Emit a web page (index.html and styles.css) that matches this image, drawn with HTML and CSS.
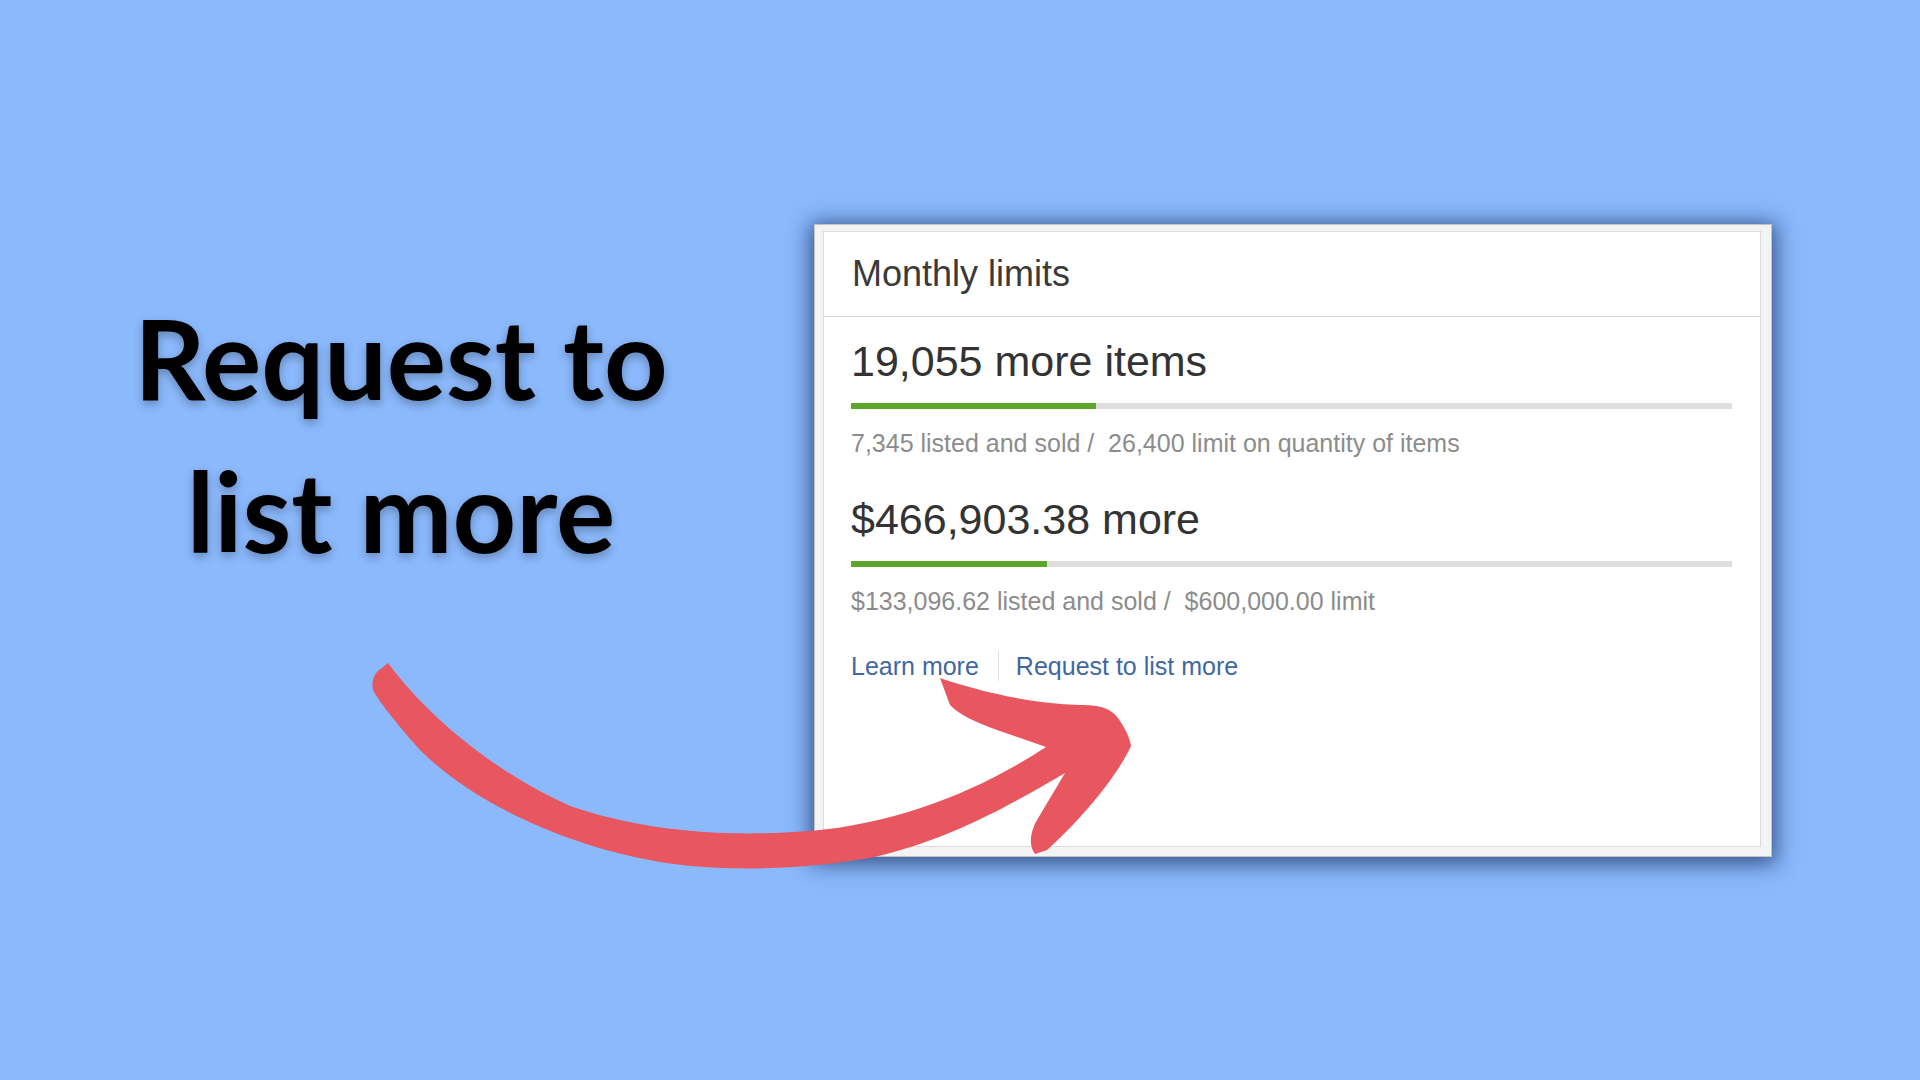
FILE: index.html
```html
<!DOCTYPE html>
<html lang="en">
<head>
  <meta charset="UTF-8" />
  <meta name="viewport" content="width=device-width, initial-scale=1.0"/>
  <title>Request to list more</title>
  <link rel="stylesheet" href="styles.css">
</head>
<body>

  <main class="slide">
    <h1 class="headline">Request to<br>list more</h1>

    <section class="limits-frame">
      <div class="limits">
        <div class="limits-head">Monthly limits</div>

        <div class="limits-body">
          <div class="limit">
            <div class="limit-left">19,055 more items</div>
            <div class="meter"><div class="meter-fill" style="width: 27.8%"></div></div>
            <div class="limit-used">7,345 listed and sold /&nbsp; 26,400 limit on quantity of items</div>
          </div>

          <div class="limit">
            <div class="limit-left">$466,903.38 more</div>
            <div class="meter"><div class="meter-fill" style="width: 22.2%"></div></div>
            <div class="limit-used">$133,096.62 listed and sold /&nbsp; $600,000.00 limit</div>
          </div>

          <div class="limit-links">
            <a href="#">Learn more</a>
            <a href="#">Request to list more</a>
          </div>
        </div>
      </div>
    </section>

    <!-- hand drawn pointer from the headline to the link -->
    <svg class="pointer" viewBox="0 0 1920 1080" width="1920" height="1080">
      <path d="M 388 663
               C 430 720, 500 775, 570 806
               C 640 830, 720 838, 810 831
               C 900 823, 980 790, 1046 747
               L 997 730
               C 975 722, 958 714, 950 705
               L 940 678
               C 975 690, 1030 704, 1080 705
               C 1100 705, 1110 708, 1118 718
               C 1125 728, 1130 738, 1131 746
               C 1115 780, 1080 820, 1047 850
               L 1035 854
               C 1028 845, 1030 830, 1040 815
               L 1065 773
               C 1010 805, 950 840, 870 858
               C 800 870, 720 872, 660 862
               C 560 845, 470 800, 420 750
               C 395 722, 378 700, 373 690
               C 371 680, 375 672, 382 668
               Z" />
    </svg>
  </main>

</body>
</html>
```

FILE: styles.css
```css
* {
  margin: 0;
  padding: 0;
  box-sizing: border-box;
}

body {
  background: #8bb9fc;
  font-family: 'Liberation Sans', Arial, sans-serif;
  overflow: hidden;
}

.slide {
  position: relative;
  width: 1920px;
  height: 1080px;
  display: flex;
  align-items: flex-start;
  padding-top: 224px;
}

.headline {
  width: 814px;
  margin-top: 57px;
  padding-right: 12px;
  font-family: 'Lato', sans-serif;
  font-weight: 700;
  font-size: 111px;
  line-height: 153px;
  text-align: center;
  color: #000;
  text-shadow: 0 4px 10px rgba(0, 0, 0, 0.28);
}

/* grey frame round the panel, like a cropped screenshot */
.limits-frame {
  width: 958px;
  height: 633px;
  display: flex;
  flex-direction: column;
  padding: 6px 10px 9px 8px;
  background: #f3f3f3;
  border: 1px solid #c4c4c4;
  box-shadow: 0 3px 20px 4px rgba(22, 44, 96, 0.72);
}

.limits {
  flex: 1;
  display: flex;
  flex-direction: column;
  background: #fff;
  border: 1px solid #dcdcdc;
}

.limits-head {
  height: 85px;
  line-height: 84px;
  padding-left: 28px;
  font-size: 36px;
  color: #3a3a3a;
  border-bottom: 1px solid #d6d6d6;
}

.limits-body {
  padding: 19px 28px 0 27px;
}

.limit + .limit {
  margin-top: 36px;
}

.limit-left {
  font-size: 43px;
  line-height: 50px;
  color: #333;
}

.meter {
  height: 6px;
  margin-top: 17px;
  background: #dedede;
}

.meter-fill {
  height: 100%;
  background: #5ba62b;
}

.limit-used {
  margin-top: 19px;
  font-size: 25px;
  line-height: 30px;
  color: #8c8c8c;
}

.limit-links {
  display: flex;
  margin-top: 35px;
  font-size: 25px;
  line-height: 30px;
}

.limit-links a {
  color: #3f68a3;
  text-decoration: none;
}

.limit-links a + a {
  margin-left: 19px;
  padding-left: 17px;
  border-left: 1px solid #e2e2e2;
}

.pointer {
  position: absolute;
  top: 0;
  left: 0;
  pointer-events: none;
}

.pointer path {
  fill: #e85660;
}
```
